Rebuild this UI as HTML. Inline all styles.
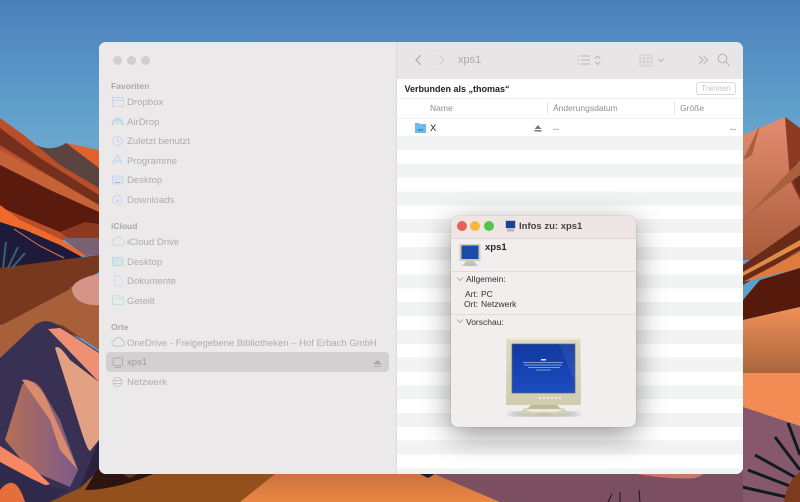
<!DOCTYPE html>
<html lang="de"><head><meta charset="utf-8"><title>Finder</title>
<style>
html,body{margin:0;padding:0}
body{width:800px;height:502px;overflow:hidden;position:relative;font-family:"Liberation Sans",sans-serif;background:#5d9ecb}
#all{position:absolute;left:0;top:0;width:800px;height:502px;filter:blur(.35px)}
#bg{position:absolute;left:0;top:0}
.t{position:absolute;white-space:nowrap;line-height:12px}
#win{position:absolute;left:99px;top:42px;width:644px;height:432px;border-radius:7px;overflow:hidden;background:#fff}
#side{position:absolute;left:0;top:0;width:297px;height:432px;background:#ebe9ea;border-right:1px solid #dcdadb}
#bar{position:absolute;left:298px;top:0;width:346px;height:37px;background:#e7e5e5}
.dot{position:absolute;width:9px;height:9px;border-radius:50%;background:#d0cfcf}
.hd{font-size:8.5px;font-weight:bold;color:#aaa9aa;left:12px}
.it{font-size:9.6px;color:#adacad;left:28px}
#sel{position:absolute;left:7px;top:310px;width:283px;height:20px;border-radius:4px;background:#d2d0d1}
#stripes{position:absolute;left:298px;top:93.5px;width:346px;height:339px;background:repeating-linear-gradient(#f2f3f3 0 13.85px,#fff 13.85px 27.7px)}
#info{position:absolute;left:451px;top:216px;width:185px;height:211px;border-radius:7px;background:#f1eeed;box-shadow:0 8px 30px rgba(0,0,0,.42),0 0 1px rgba(0,0,0,.35);overflow:hidden}
#info .tb{position:absolute;left:0;top:0;width:185px;height:22px;background:#efe5e5;border-bottom:1px solid #ddd8d8}
.ln{position:absolute;left:0;width:185px;height:1px;background:#e0dcdb}
.c{position:absolute;width:10px;height:10px;border-radius:50%}
svg{position:absolute;overflow:visible}
</style></head><body><div id="all">
<svg id="bg" width="800" height="502" viewBox="0 0 800 502">
<defs>
<linearGradient id="sky" x1="0" y1="0" x2="0" y2="1"><stop offset="0" stop-color="#4a80ba"/><stop offset=".5" stop-color="#5f9dcb"/><stop offset="1" stop-color="#79b3cf"/></linearGradient>
<linearGradient id="ros" x1="0" y1="0" x2="1" y2="0"><stop offset="0" stop-color="#b56f55"/><stop offset="1" stop-color="#7c5a8a"/></linearGradient>
<linearGradient id="sal" x1="0" y1="0" x2="0" y2="1"><stop offset="0" stop-color="#e58c70"/><stop offset="1" stop-color="#a85c3c"/></linearGradient>
<linearGradient id="sand" x1="0" y1="0" x2="0" y2="1"><stop offset="0" stop-color="#f09058"/><stop offset="1" stop-color="#a9653c"/></linearGradient>
<linearGradient id="or" x1="0" y1="0" x2="0" y2="1"><stop offset="0" stop-color="#c66f3d"/><stop offset="1" stop-color="#ea8644"/></linearGradient>
</defs>
<rect width="800" height="200" fill="url(#sky)"/>
<!-- left -->
<path d="M66 143L99 150V172L66 150Z" fill="#e0632c"/>
<path d="M28 141C40 148 52 152 66 143L99 168V200H40Z" fill="#5b433f"/>
<path d="M0 118L25 136L60 165L99 188V240H0Z" fill="#b84e2a"/>
<path d="M0 128L40 158L99 195V205L40 170L0 145Z" fill="#74301c"/>
<path d="M0 150L50 177L99 205V215L50 190L0 165Z" fill="#c66237"/>
<path d="M0 165L50 190L99 212V230L60 232L0 207Z" fill="#5a1a0d"/>
<path d="M60 232L85 222L99 224V240H70Z" fill="#8c3a22"/>
<path d="M62 238H99V255L85 256Z" fill="#7a6072"/>
<path d="M0 205L20 220L60 239L85 255L70 258L0 226Z" fill="#f0692a"/>
<path d="M0 222L25 230L60 245L82 257L30 270H0Z" fill="#1d1a3c"/>
<path d="M14 229L40 246L64 258" fill="none" stroke="#e77b45" stroke-width="1"/>
<path d="M0 268L99 255V272L70 288L99 300V345L40 322L0 325Z" fill="#77381f"/>
<path d="M0 326L72 288L99 302V350L62 325L40 322L0 358Z" fill="#a8603a"/>
<path d="M72 288C75 280 88 276 99 274V305C85 306 72 300 72 288Z" fill="#d69387"/>
<path d="M0 358L35 325C45 318 55 322 62 328L99 352V502H0Z" fill="#383154"/>
<path d="M48 329L60 328C72 335 88 346 99 353V382Z" fill="#ef9075"/>
<path d="M55 348C58 345 62 349 70 360L99 382V440L90 451C85 447 80 425 55 348Z" fill="#e3a184"/>
<path d="M5 440L22 385C28 378 38 380 45 395L60 420L78 470L70 487L30 470Z" fill="url(#ros)"/>
<path d="M22 380C30 378 38 385 45 396L78 470L60 450L50 420Z" fill="#d98b70"/>
<path d="M0 446L30 465L50 484L40 487L20 476L0 462Z" fill="#f58763"/>
<path d="M0 462L30 478L45 485L68 490L50 502H0Z" fill="#2f2a4c"/>
<path d="M0 490C10 478 18 480 25 502H0Z" fill="#e66e3a"/>
<path d="M3 268L6 242M8 268L18 247M12 268L25 253" stroke="#3f6a70" stroke-width="2" fill="none" opacity=".9"/>
<path d="M99 440L80 488L99 485Z" fill="#2a2040"/>
<!-- right -->
<path d="M743 135L785 117L800 145V260H743Z" fill="url(#sal)"/>
<path d="M785 117L800 128V200L790 180Z" fill="#8a3b22"/>
<path d="M793 165C792 180 795 190 800 195V160Z" fill="#6e2a18"/>
<path d="M743 160L760 125L752 155ZM743 220L800 160V175L760 205Z" fill="#a9603e"/>
<path d="M743 265L800 225V250L743 285Z" fill="#6a2a18"/>
<path d="M743 272L800 240V246L743 276Z" fill="#e08a48"/>
<path d="M743 282L800 252V268L760 278Z" fill="#de7c3f"/>
<path d="M743 300L760 280L800 268V307L743 320Z" fill="#561a0c"/>
<path d="M743 320L800 307V373H743Z" fill="url(#sand)"/>
<path d="M743 373H800V426L743 407Z" fill="#f38b55"/>
<path d="M743 407L800 426V502H743Z" fill="#87586c"/>
<path d="M788 423L800 455M775 437L800 470M755 455L800 480M748 470L800 490M742 487L800 500" stroke="#0e1c1c" stroke-width="3" fill="none"/>
<path d="M784 502C786 485 795 475 800 472V502Z" fill="#7c3a1e"/>
<!-- bottom -->
<path d="M50 502L80 488L99 470H280V502Z" fill="#94501c"/>
<path d="M280 470L240 502H500L425 470Z" fill="url(#or)"/>
<path d="M425 470L500 502H743V470Z" fill="#7b4f60"/>
<path d="M615 470C640 476 680 480 695 478C705 475 707 472 700 470Z" fill="#c9796a"/>
<path d="M412 470L428 478L438 472Z" fill="#1e1a30"/>
<path d="M85 490C120 490 170 470 175 460L100 465Z" fill="#2d1410"/>
<path d="M100 462L130 478L145 470L165 470L145 455Z" fill="#6a3424"/>
<path d="M608 502L612 494M620 502L620 492M640 502L639 490" stroke="#15191c" stroke-width="1"/>
</svg>

<div id="win">
 <div id="side">
  <div class="dot" style="left:14px;top:14px"></div><div class="dot" style="left:28px;top:14px"></div><div class="dot" style="left:42px;top:14px"></div>
  <div class="t hd" style="top:38px">Favoriten</div>
  <div class="t it" style="top:55px">Dropbox</div>
  <div class="t it" style="top:75px">AirDrop</div>
  <div class="t it" style="top:94px">Zuletzt benutzt</div>
  <div class="t it" style="top:114px">Programme</div>
  <div class="t it" style="top:133px">Desktop</div>
  <div class="t it" style="top:153px">Downloads</div>
  <div class="t hd" style="top:178px">iCloud</div>
  <div class="t it" style="top:195px">iCloud Drive</div>
  <div class="t it" style="top:215px">Desktop</div>
  <div class="t it" style="top:234px">Dokumente</div>
  <div class="t it" style="top:254px">Geteilt</div>
  <div class="t hd" style="top:279px">Orte</div>
  <div class="t it" style="top:296px;font-size:9.5px">OneDrive - Freigegebene Bibliotheken – Hof Erbach GmbH</div>
  <div id="sel"></div>
  <div class="t it" style="top:315px;color:#9d9c9d">xps1</div>
  <div class="t it" style="top:335px">Netzwerk</div>
  <svg width="297" height="432" style="left:0;top:0" fill="none" stroke="#c5d6ea" stroke-width="1">
   <path d="M13.500 55.500h9l1.500 1.500h.5v7.500h-11zM13.500 58.500h11"/>
   <path d="M14 83a4.700 4.700 0 1 1 9 0" stroke-width="2.500"/><circle cx="18.500" cy="80" r="1.500"/>
   <circle cx="18.500" cy="99" r="4.700"/><path d="M18.500 96.500v2.500l1.500 1"/>
   <path d="M18.500 113l-4.500 9M18.500 113l4.500 9M13.500 119h10" stroke-width="1.200"/>
   <rect x="13.500" y="134" width="10.500" height="8" rx="1" fill="#dbe5f0"/><path d="M16 140.500h5" stroke="#a3b8d0"/>
   <circle cx="18.500" cy="158" r="4.700"/><path d="M18.500 155.500v4.500M16.800 158.500l1.700 1.700 1.700-1.700"/>
   <path d="M15 203h8a2.700 2.700 0 0 0 .5-5.300a4.300 4.300 0 0 0-8-.5a3 3 0 0 0-.5 5.800z" stroke="#cbd8da"/>
   <rect x="13.500" y="215.500" width="10.500" height="8" rx="1" fill="#d6e4ea" stroke="#bfd7e1"/>
   <path d="M15.500 233.500h4.500l3 3v7.500h-7.500z" stroke="#cbe2e4"/>
   <path d="M13.500 253.500h5l1.500 1.500h4.500v7.500h-11zM13.500 257h11" stroke="#c4dee1"/>
   <path d="M15 304h8a2.700 2.700 0 0 0 .5-5.300a4.300 4.300 0 0 0-8-.5a3 3 0 0 0-.5 5.800z" stroke="#c4c3c4"/>
   <rect x="14" y="316" width="9.500" height="7.500" rx="1" stroke="#aeadae"/><path d="M15.500 325.500h6.500" stroke="#aeadae"/>
   <circle cx="18.500" cy="340" r="4.500" stroke="#c4c3c4"/><path d="M14.500 338.500h8M14.500 341.500h8" stroke="#c4c3c4"/>
   <path d="M275 322l3.500-3.500 3.500 3.500zM275 324.500h7" fill="#a9a8a9" stroke="#a9a8a9" stroke-width=".7"/>
  </svg>
 </div>
 <div id="bar"></div>
 <div id="stripes"></div>
 <div class="t" style="left:359px;top:12px;font-size:11px;color:#a9a8a9">xps1</div>
 <svg width="644" height="110" style="left:0;top:0" fill="none" stroke="#b5b4b4" stroke-width="1.100">
  <path d="M322 13l-5 5 5 5" stroke-width="1.300"/><path d="M340 13l5 5-5 5" stroke="#d6d4d4" stroke-width="1.300"/>
  <path d="M482 14h9M482 18h9M482 22h9M478.500 14h1.500M478.500 18h1.500M478.500 22h1.500" stroke-width="1"/>
  <path d="M496 16.500l2.500-2.500 2.500 2.500M496 20l2.500 2.500 2.500-2.500" stroke-width="1"/>
  <path d="M541 13h12v11h-12zM541 16.500h12M541 20h12M545 13v11M549 13v11" stroke="#cbcaca" stroke-width=".8"/>
  <path d="M559.500 17l2.500 2.500 2.500-2.500" stroke-width="1"/>
  <path d="M600 14l4 4-4 4M604.500 14l4 4-4 4" stroke-width="1"/>
  <circle cx="623.500" cy="16.500" r="4.300"/><path d="M627 20l3.500 4"/>
 </svg>
 <div class="t" style="left:305.500px;top:40.500px;font-size:9px;font-weight:bold;color:#222">Verbunden als „thomas“</div>
 <div class="t" style="left:597px;top:40px;width:38px;height:11px;border:1px solid #dcdbdb;border-radius:3px;font-size:8px;color:#c4c3c3;text-align:center;line-height:11px">Trennen</div>
 <div style="position:absolute;left:298px;top:56px;width:346px;height:1px;background:#efefef"></div>
 <div style="position:absolute;left:298px;top:75.500px;width:346px;height:1px;background:#efefef"></div>
 <div style="position:absolute;left:448px;top:60px;width:1px;height:12px;background:#e4e4e4"></div>
 <div style="position:absolute;left:575px;top:60px;width:1px;height:12px;background:#e4e4e4"></div>
 <div class="t" style="left:331px;top:59.500px;font-size:8.500px;color:#8f8f8f">Name</div>
 <div class="t" style="left:454px;top:59.500px;font-size:8.500px;color:#8f8f8f">Änderungsdatum</div>
 <div class="t" style="left:581px;top:59.500px;font-size:8.500px;color:#8f8f8f">Größe</div>
 <svg width="644" height="110" style="left:0;top:0">
  <path d="M316 81h4l1 1h6v9h-11z" fill="#6cbdec"/><path d="M319 87h5v2h-5z" fill="#3f93c9"/>
  <path d="M435.500 87l3.500-4 3.500 4zM435.500 88h7v1.500h-7z" fill="#777"/>
 </svg>
 <div class="t" style="left:331px;top:81px;font-size:9.500px;color:#222">X</div>
 <div class="t" style="left:454px;top:81px;font-size:9px;color:#777">--</div>
 <div class="t" style="left:631px;top:81px;font-size:9px;color:#777">--</div>
</div>

<div id="info">
 <div class="tb"></div>
 <div class="c" style="left:5.500px;top:5px;background:#ec5f58"></div>
 <div class="c" style="left:19px;top:5px;background:#f5b93c"></div>
 <div class="c" style="left:32.500px;top:5px;background:#54c24d"></div>
 <svg width="12" height="13" style="left:54px;top:4px">
  <rect x="0" y="0" width="11" height="9" rx="1" fill="#c3c6cf"/><rect x="1" y="1" width="9" height="7" fill="#1d3f96"/>
  <path d="M2.500 9h6l1 2.500h-8z" fill="#b9b7aa"/>
 </svg>
 <div class="t" style="left:68px;top:5px;font-size:9.500px;font-weight:bold;color:#444">Infos zu: xps1</div>
 <svg width="24" height="24" style="left:7px;top:27px">
  <rect x="1.500" y="1" width="21" height="17" rx="1" fill="#cfcdb2"/><rect x="3.500" y="2.500" width="17" height="13.500" fill="#1a4ba8"/>
  <path d="M8 18h8l2 3H6z" fill="#c9c5a9"/><ellipse cx="12" cy="22" rx="8" ry="1" fill="#bbb"/>
 </svg>
 <div class="t" style="left:34px;top:26px;font-size:9.500px;font-weight:bold;color:#222">xps1</div>
 <div class="ln" style="top:55px"></div>
 <svg width="12" height="8" style="left:5px;top:60px" fill="none" stroke="#b3b0b0" stroke-width="1"><path d="M1 1.500l3 3 3-3"/></svg>
 <div class="t" style="left:15px;top:57px;font-size:8.500px;color:#333">Allgemein:</div>
 <div class="t" style="left:14px;top:72px;font-size:8.500px;color:#333">Art:</div>
 <div class="t" style="left:30px;top:72px;font-size:8.500px;color:#333">PC</div>
 <div class="t" style="left:13px;top:82px;font-size:8.500px;color:#333">Ort:</div>
 <div class="t" style="left:30px;top:82px;font-size:8.500px;color:#333">Netzwerk</div>
 <div class="ln" style="top:98px"></div>
 <svg width="12" height="8" style="left:5px;top:102px" fill="none" stroke="#b3b0b0" stroke-width="1"><path d="M1 1.500l3 3 3-3"/></svg>
 <div class="t" style="left:15px;top:100px;font-size:8.500px;color:#333">Vorschau:</div>
 <svg width="185" height="211" style="left:0;top:0">
  <defs><linearGradient id="scr" x1="0" y1="0" x2="0" y2="1"><stop offset="0" stop-color="#1238a0"/><stop offset="1" stop-color="#1c4cc0"/></linearGradient>
  <linearGradient id="bez" x1="0" y1="0" x2="0" y2="1"><stop offset="0" stop-color="#dcd9bd"/><stop offset="1" stop-color="#d0cdae"/></linearGradient>
  <filter id="b"><feGaussianBlur stdDeviation="2"/></filter></defs>
  <ellipse cx="93" cy="198" rx="36" ry="2.500" fill="#aaa" filter="url(#b)"/>
  <path d="M74 192h38l6 5-12 2-13-2-13 2-12-2z" fill="#d4d1b3"/>
  <path d="M74 193c8-1.500 30-1.500 38 0l-6 3H80z" fill="#eceacf"/>
  <path d="M80 189h26l4 4H76z" fill="#bdb99b"/>
  <path d="M55.500 122h74l.5 67h-75z" fill="url(#bez)"/>
  <path d="M55.500 122h74l-1 2H57z" fill="#ebe8cf"/>
  <rect x="61" y="128" width="63" height="49" fill="url(#scr)" stroke="#5f6180" stroke-width=".7"/>
  <path d="M108 128h16v38z" fill="#fff" opacity=".07"/>
  <rect x="90" y="143" width="5" height="1.500" fill="#dfe6f5"/>
  <path d="M72 146.500h40M73 149h38M77 151.500h32M85 154h15" stroke="#a5b8e6" stroke-width=".8"/>
  <path d="M88 182h22" stroke="#f1efdb" stroke-width="2" stroke-dasharray="2 2"/>
 </svg>
</div>
</div></body></html>
